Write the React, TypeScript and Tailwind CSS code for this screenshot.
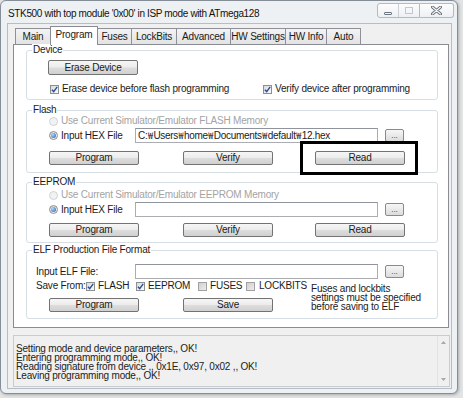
import React from 'react';

type Tab = { label: string; w: string; active?: boolean };

const tabs: Tab[] = [
  { label: 'Main', w: 'w-[36px]' },
  { label: 'Program', w: 'w-[48px]', active: true },
  { label: 'Fuses', w: 'w-[35px]' },
  { label: 'LockBits', w: 'w-[46px]' },
  { label: 'Advanced', w: 'w-[55px]' },
  { label: 'HW Settings', w: 'w-[56px]' },
  { label: 'HW Info', w: 'w-[42px]' },
  { label: 'Auto', w: 'w-[35px]' },
];

function Button({ label, className = '' }: { label: string; className?: string }) {
  return (
    <div
      className={`w-[90px] h-[14px] shrink-0 rounded-[2px] border border-[#737373] bg-[linear-gradient(#f6f6f6_0%,#ececec_48%,#dddddd_52%,#d0d0d0_100%)] flex items-center justify-center leading-none ${className}`}
    >
      {label}
    </div>
  );
}

function DotsButton() {
  return (
    <div className="ml-[7px] w-[19px] h-[13px] rounded-[2px] border border-[#8a8a8a] bg-[linear-gradient(#f6f6f6,#dcdcdc)] flex items-end justify-center pb-[1px] text-[8px] leading-[8px] tracking-normal text-[#333]">
      ...
    </div>
  );
}

function Check({ checked }: { checked: boolean }) {
  return (
    <span
      className={`w-[9px] h-[9px] shrink-0 border flex items-center justify-center ${
        checked ? 'border-[#8e8f8f] bg-[linear-gradient(135deg,#d8dadc,#fbfbfb)]' : 'border-[#a2a2a2] bg-[linear-gradient(135deg,#cfcfcf,#ececec)]'
      }`}
    >
      {checked && (
        <svg width="7" height="7" viewBox="0 0 7 7">
          <path d="M0.9 3.7 L2.7 5.6 L6.2 0.9" fill="none" stroke="#284e98" strokeWidth="1.4" />
        </svg>
      )}
    </span>
  );
}

function Radio({ on, disabled }: { on?: boolean; disabled?: boolean }) {
  return (
    <span
      className={`w-[9px] h-[9px] shrink-0 rounded-full border flex items-center justify-center ${
        disabled ? 'border-[#cfd2d5] bg-[#f2f2f2]' : 'border-[#8a8d90] bg-[linear-gradient(135deg,#d6d8da,#f6f6f6)]'
      }`}
    >
      {on && <span className="w-[5px] h-[5px] rounded-full bg-[radial-gradient(circle_at_35%_35%,#a9d8ff,#1e5cbd)]" />}
    </span>
  );
}

function Group({ label, className, children }: { label: string; className: string; children: React.ReactNode }) {
  return (
    <div className={`relative shrink-0 rounded-[3px] border border-[#d5dfe5] ${className}`}>
      <span className="absolute -top-[7px] left-[5px] bg-white px-[1px] leading-[12px]">{label}</span>
      {children}
    </div>
  );
}

// Korean Windows draws the backslash as a won sign
function Won() {
  return (
    <span className="inline-flex w-[6px] justify-center font-['Noto_Sans_CJK_KR',sans-serif] text-[9px] tracking-normal">
      ₩
    </span>
  );
}

function HexRow({ parts }: { parts: string[] }) {
  return (
    <div className="flex items-center h-[15px]">
      <div className="w-[86px] flex items-center gap-[3px]">
        <Radio on />
        <span>Input HEX File</span>
      </div>
      <div className="w-[243px] h-[15px] border border-[#abadb3] border-t-[#8f939b] bg-white pl-[2px] flex items-center whitespace-nowrap overflow-hidden tracking-[-0.3px]">
        {parts.map((p, i) => (
          <React.Fragment key={i}>
            {i > 0 && <Won />}
            <span>{p}</span>
          </React.Fragment>
        ))}
      </div>
      <DotsButton />
    </div>
  );
}

export default function App() {
  return (
    <div className="w-[463px] h-[398px] bg-[#e2e3e4] overflow-hidden font-['Liberation_Sans',Arial,sans-serif] text-[10px] tracking-[-0.2px] leading-[12px] text-[#1b1b1b]">
      {/* Window */}
      <div className="w-[458px] h-[394px] rounded-[6px] border border-[#858d96] bg-[#eef1f4] flex flex-col pl-[6px] pr-[5px] pb-[4px] shadow-[1px_1px_3px_rgba(0,0,0,0.25)]">
        {/* Title bar */}
        <div className="h-[22px] shrink-0 flex justify-between">
          <div className="pt-[7px] pl-[1px] tracking-[-0.35px] text-[#111]">
            STK500 with top module '0x00' in ISP mode with ATmega128
          </div>
          <div className="flex mt-[2px] -mr-[2px] h-[15px]">
            <div className="flex rounded-l-[3px] border border-[#b3bac2] bg-[linear-gradient(#fdfdfd,#edf0f3)]">
              <div className="w-[21px] flex items-center justify-center border-r border-[#c9cfd5]">
                <span className="mt-[5px] w-[8px] h-[3px] rounded-[1px] border border-[#6c747c]" />
              </div>
              <div className="w-[20px] flex items-center justify-center">
                <span className="w-[8px] h-[7px] border border-[#c3c8ce]" />
              </div>
            </div>
            <div className="w-[34px] rounded-r-[3px] border border-l-0 border-[#b3bac2] bg-[linear-gradient(#fdfdfd,#edf0f3)] flex items-center justify-center">
              <svg width="11" height="9" viewBox="0 0 11 9">
                <path d="M1.5 1 L9.5 8 M9.5 1 L1.5 8" stroke="#6a7179" strokeWidth="3" strokeLinecap="round" />
                <path d="M1.5 1 L9.5 8 M9.5 1 L1.5 8" stroke="#f6f7f8" strokeWidth="1.1" strokeLinecap="round" />
              </svg>
            </div>
          </div>
        </div>

        {/* Client area */}
        <div className="flex-1 border border-[#b6bdc5] bg-[#f0f0f0] pl-[5px] pr-[2px] pt-[2px] flex flex-col">
          {/* Tabs */}
          <div className="h-[18px] shrink-0 flex items-end pl-[2px]">
            {tabs.map((t, i) => (
              <div
                key={t.label}
                className={`${t.w} ${i > 0 ? '-ml-px' : ''} ${
                  t.active
                    ? 'relative z-10 h-[19px] -mb-px bg-white border-x border-t border-[#898c95] pb-[3px]'
                    : 'h-[16px] bg-[linear-gradient(#f3f3f3,#e3e3e3)] border-x border-t border-[#8d9098] pt-[1px]'
                } flex items-center justify-center whitespace-nowrap`}
              >
                {t.label}
              </div>
            ))}
          </div>

          {/* Tab page */}
          <div className="h-[284px] w-[436px] shrink-0 border border-[#898c95] bg-white pt-[5px] pl-[12px] flex flex-col">
            <Group label="Device" className="w-[412px] h-[50px]">
              <div className="pl-[21px] pt-[9px]">
                <Button label="Erase Device" className="h-[15px]" />
              </div>
              <div className="mt-[8px] pl-[23px] h-[12px] flex items-center">
                <div className="w-[213px] flex items-center gap-[3px]">
                  <Check checked />
                  <span>Erase device before flash programming</span>
                </div>
                <div className="flex items-center gap-[3px]">
                  <Check checked />
                  <span>Verify device after programming</span>
                </div>
              </div>
            </Group>

            <Group label="Flash" className="mt-[10px] w-[412px] h-[63px]">
              <div className="pl-[22px] pt-[4px]">
                <div className="h-[12px] flex items-center gap-[3px] text-[#a3a3a3]">
                  <Radio disabled />
                  <span>Use Current Simulator/Emulator FLASH Memory</span>
                </div>
                <div className="mt-[1px]">
                  <HexRow parts={['C:', 'Users', 'home', 'Documents', 'default', '12.hex']} />
                </div>
                <div className="mt-[8px] flex">
                  <Button label="Program" />
                  <Button label="Verify" className="ml-[44px]" />
                  <Button label="Read" className="ml-[42px]" />
                </div>
              </div>
              <div className="absolute left-[273px] top-[30px] w-[118px] h-[34px] border-[3px] border-black z-20" />
            </Group>

            <Group label="EEPROM" className="mt-[9px] w-[412px] h-[61px]">
              <div className="pl-[22px] pt-[6px]">
                <div className="h-[12px] flex items-center gap-[3px] text-[#a3a3a3]">
                  <Radio disabled />
                  <span>Use Current Simulator/Emulator EEPROM Memory</span>
                </div>
                <div className="mt-[1px]">
                  <HexRow parts={[]} />
                </div>
                <div className="mt-[6px] flex">
                  <Button label="Program" />
                  <Button label="Verify" className="ml-[44px]" />
                  <Button label="Read" className="ml-[42px]" />
                </div>
              </div>
            </Group>

            <Group label="ELF Production File Format" className="mt-[7px] w-[412px] h-[69px]">
              <div className="pl-[9px] pt-[13px]">
                <div className="flex items-center h-[15px]">
                  <span className="w-[99px]">Input ELF File:</span>
                  <div className="w-[243px] h-[15px] border border-[#abadb3] border-t-[#8f939b] bg-white" />
                  <DotsButton />
                </div>
                <div className="mt-[1px] flex">
                  <div className="w-[275px]">
                    <div className="h-[12px] flex items-center">
                      <span className="w-[50px]">Save From:</span>
                      <div className="w-[50px] flex items-center gap-[3px]">
                        <Check checked />
                        <span>FLASH</span>
                      </div>
                      <div className="w-[62px] flex items-center gap-[3px]">
                        <Check checked />
                        <span>EEPROM</span>
                      </div>
                      <div className="w-[48px] flex items-center gap-[3px]">
                        <Check checked={false} />
                        <span>FUSES</span>
                      </div>
                      <div className="flex items-center gap-[4px]">
                        <Check checked={false} />
                        <span>LOCKBITS</span>
                      </div>
                    </div>
                    <div className="mt-[6px] ml-[13px] flex">
                      <Button label="Program" />
                      <Button label="Save" className="ml-[44px]" />
                    </div>
                  </div>
                  <div className="mt-[4px] leading-[9px]">
                    <div>Fuses and lockbits</div>
                    <div>settings must be specified</div>
                    <div>before saving to ELF</div>
                  </div>
                </div>
              </div>
            </Group>
          </div>

          {/* Log */}
          <div className="mt-[7px] w-[437px] h-[52px] shrink-0 border border-[#c8ccd1] bg-[#f0f0f0] flex">
            <div className="flex-1 pl-[2px] pt-[8px] leading-[9px] text-[#222]">
              <div>Setting mode and device parameters,, OK!</div>
              <div>Entering programming mode,, OK!</div>
              <div>Reading signature from device ,, 0x1E, 0x97, 0x02 ,, OK!</div>
              <div>Leaving programming mode,, OK!</div>
            </div>
            <div className="w-[12px] border-l border-[#e2e2e2] flex flex-col items-center justify-between py-[5px]">
              <svg width="5" height="3" viewBox="0 0 5 3">
                <path d="M0 3 L2.5 0 L5 3 Z" fill="#a8a8a8" />
              </svg>
              <svg width="5" height="3" viewBox="0 0 5 3">
                <path d="M0 0 L5 0 L2.5 3 Z" fill="#a8a8a8" />
              </svg>
            </div>
          </div>
        </div>
      </div>
    </div>
  );
}
